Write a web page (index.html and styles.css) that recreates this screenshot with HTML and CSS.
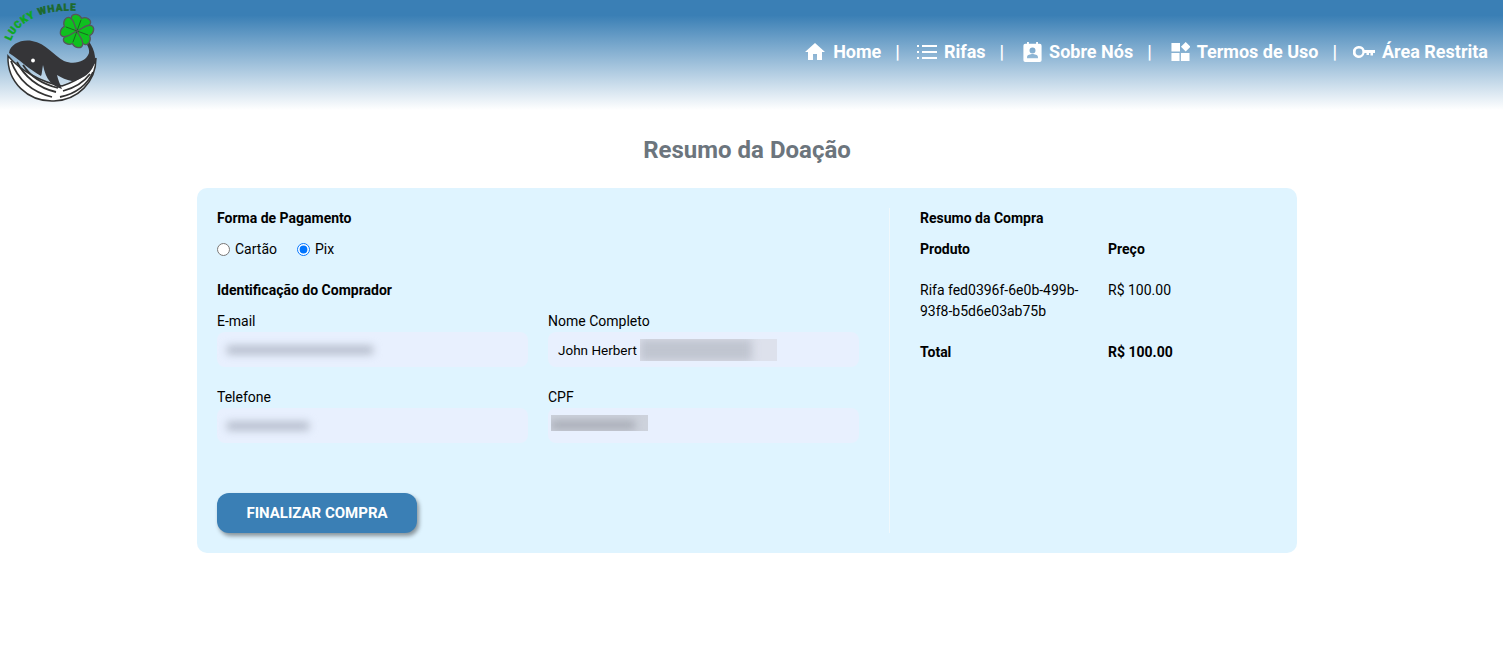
FILE: index.html
```html
<!DOCTYPE html>
<html lang="pt-BR">
<head>
  <meta charset="UTF-8">
  <meta name="viewport" content="width=device-width, initial-scale=1.0">
  <title>Lucky Whale</title>
  <link rel="stylesheet" href="styles.css">
</head>
<body>

  <header class="topbar">
    <a class="logo" href="#">
      <svg width="104" height="104" viewBox="0 0 104 104">
        <defs>
          <path id="logoArc" d="M11 41 C16 26 36 8 78 11"/>
          <g id="leaf">
            <path d="M0 0 C-3 -4 -10 -6 -10 -11.500 C-10 -15.500 -4 -17 0 -13.500 C4 -17 10 -15.500 10 -11.500 C10 -6 3 -4 0 0Z"/>
            <path d="M0 0 L0 -12" fill="none" stroke="#1c5a22" stroke-width="0.8"/>
          </g>
        </defs>
        <text class="logo-text"><textPath href="#logoArc"><tspan class="lucky">LUCKY</tspan> <tspan class="whale">WHALE</tspan></textPath></text>
        <!-- whale belly -->
        <path d="M8 56 C7 82 28 102 54 101 C78 100 96 82 96 58 C92 72 80 80 62 86 C40 82 20 70 8 56Z" fill="#fff" stroke="#333" stroke-width="1.5"/>
        <path d="M11 61 C18 80 32 92 52 97 M17 62 C24 76 38 88 56 92 M23 65 C30 76 42 84 58 88 M60 97 C76 94 88 84 93 72 M63 91 C74 88 84 82 90 74" fill="none" stroke="#333" stroke-width="1.800"/>
        <!-- whale body -->
        <path d="M9 53 C10 44 22 39 32 41 C46 43 54 56 64 61 C74 65 86 62 89 53 C90 48 86 42 78 32 L80 31 C88 38 96 50 95 60 C94 72 82 80 72 81 C66 80 62 78 57 75 C58 80 60 84 62 89 C52 86 46 80 43 65 C42 70 42 74 41 76 C30 70 20 60 9 53Z" fill="#353538"/>
        <circle cx="33" cy="60.500" r="1.900" fill="#fff"/>
        <!-- clover -->
        <g fill="#0fc01f" stroke="#55585a" stroke-width="1.300">
          <use href="#leaf" transform="translate(77 31) rotate(20)"/>
          <use href="#leaf" transform="translate(77 31) rotate(110)"/>
          <use href="#leaf" transform="translate(77 31) rotate(200)"/>
          <use href="#leaf" transform="translate(77 31) rotate(290)"/>
        </g>
      </svg>
    </a>
    <nav class="menu">
      <a href="#">
        <svg class="ico" width="20" height="17" viewBox="2 3 20 17"><path d="M10 20v-6h4v6h5v-8h3L12 3 2 12h3v8z"/></svg>
        Home
      </a>
      <span class="sep">|</span>
      <a href="#">
        <svg class="ico" width="20" height="16" viewBox="0 0 20 16"><path d="M0 1h2v2H0zM5 1h15v2H5zM0 7h2v2H0zM5 7h15v2H5zM0 13h2v2H0zM5 13h15v2H5z"/></svg>
        Rifas
      </a>
      <span class="sep">|</span>
      <a class="nudge-2" href="#">
        <svg class="ico" width="19" height="20" viewBox="0 0 20 22"><path fill-rule="evenodd" d="M4 0h2v2h8V0h2v2h2a2 2 0 0 1 2 2v16a2 2 0 0 1-2 2H2a2 2 0 0 1-2-2V4a2 2 0 0 1 2-2h2zM10 6a3.300 3.300 0 1 0 0 6.600A3.300 3.300 0 0 0 10 6zM4 18h12v-1.500c0-2.200-4-3.200-6-3.200s-6 1-6 3.200z"/></svg>
        Sobre Nós
      </a>
      <span class="sep">|</span>
      <a class="nudge-1" href="#">
        <svg class="ico" width="20" height="19" viewBox="0 0 20 20"><path d="M1 1h9v9H1zM1 11.500h8.500V20H1zM11 11.500h9V20h-9zM16 0l5 5-5 5-5-5z"/></svg>
        Termos de Uso
      </a>
      <span class="sep">|</span>
      <a class="pull-1" href="#">
        <svg class="ico" width="22" height="12" viewBox="0 0 22 12"><path fill-rule="evenodd" d="M6 0a6 6 0 0 1 5.600 4H22v3h-2v2.500h-2.500V7H16v2h-2.500V7h-1.900A6 6 0 1 1 6 0zm0 2.600a3.200 3.200 0 1 0 0 6.800 3.200 3.200 0 0 0 0-6.800z"/></svg>
        Área Restrita
      </a>
    </nav>
  </header>

  <main>
    <h1 class="page-title">Resumo da Doação</h1>

    <section class="card">
      <div class="col-form">
        <h2>Forma de Pagamento</h2>
        <div class="radios">
          <label><input type="radio" name="pay"> Cartão</label>
          <label><input type="radio" name="pay" checked> Pix</label>
        </div>

        <h2 class="buyer">Identificação do Comprador</h2>
        <div class="fields">
          <div class="field">
            <label>E-mail</label>
            <div class="input"><span class="blur blur-email"></span></div>
          </div>
          <div class="field">
            <label>Nome Completo</label>
            <div class="input"><span class="name">John Herbert</span><span class="blur-box blur-name"><i></i></span></div>
          </div>
          <div class="field">
            <label>Telefone</label>
            <div class="input"><span class="blur blur-phone"></span></div>
          </div>
          <div class="field">
            <label>CPF</label>
            <div class="input"><span class="blur-box blur-cpf"><i></i></span></div>
          </div>
        </div>

        <button class="buy" type="button">FINALIZAR COMPRA</button>
      </div>

      <div class="col-summary">
        <h2>Resumo da Compra</h2>
        <div class="summary">
          <b>Produto</b>
          <b>Preço</b>
          <span class="prod">Rifa fed0396f-6e0b-499b-93f8-b5d6e03ab75b</span>
          <span class="prod">R$ 100.00</span>
          <b>Total</b>
          <b>R$ 100.00</b>
        </div>
      </div>
    </section>
  </main>

</body>
</html>
```

FILE: styles.css
```css
body {
  margin: 0;
  padding: 0;
  font-family: 'Roboto', 'Liberation Sans', sans-serif;
  font-size: 14px;
  color: #000000;
  background-color: #ffffff;
}

.topbar {
  height: 110px;
  display: flex;
  justify-content: space-between;
  background: linear-gradient(to bottom, #3a7fb5 0%, #3a7fb5 14%, #ffffff 100%);
}
.logo {
  display: block;
  height: 104px;
}
.logo-text {
  font-size: 10px;
  font-weight: 900;
  letter-spacing: 0.9px;
  stroke-width: 0.4px;
}
.lucky { fill: #0fa81f; stroke: #0fa81f; }
.whale { fill: #1d6a2c; stroke: #1d6a2c; }
.menu {
  display: flex;
  align-items: center;
  height: 103px;
  padding-right: 15px;
  font-size: 18px;
  font-weight: 700;
  color: white;
}
.menu a {
  display: flex;
  align-items: center;
  gap: 7px;
  color: white;
  text-decoration: none;
}
.menu a:first-child {
  gap: 8px;
}
.menu .nudge-1 { margin-left: 1px; }
.menu .nudge-2 { margin-left: 2px; }
.menu .pull-1 { margin-left: -1px; }
.ico {
  fill: white;
}
.sep {
  margin: 0 17px 0 14px;
}

main {
  padding-right: 9px;
}
.page-title {
  margin: 26px 0 24px;
  text-align: center;
  font-size: 24px;
  line-height: 28px;
  font-weight: 700;
  color: #6c757d;
}

.card {
  width: 1100px;
  height: 365px;
  box-sizing: border-box;
  margin: 0 auto;
  padding: 20px;
  display: flex;
  background-color: #dff4ff;
  border-radius: 10px;
}
.col-form {
  width: 673px;
  box-sizing: border-box;
  padding-right: 30px;
  border-right: 1px solid #f0f8fc;
}
.col-summary {
  flex: 1;
  padding-left: 30px;
}
h2 {
  margin: 0;
  font-size: 14px;
  line-height: 20px;
  font-weight: 700;
}
.radios {
  display: flex;
  gap: 20px;
  margin-top: 11px;
  line-height: 20px;
}
.radios label {
  display: flex;
  align-items: center;
  gap: 5px;
}
.radios input {
  margin: 0;
  width: 13px;
  height: 13px;
}
.buyer {
  margin-top: 21px;
}

.fields {
  display: grid;
  grid-template-columns: 311px 311px;
  column-gap: 20px;
  row-gap: 20px;
  margin-top: 11px;
}
.field label {
  display: block;
  line-height: 20px;
  margin-bottom: 1px;
}
.input {
  height: 35px;
  display: flex;
  align-items: center;
  background-color: #e8f0fe;
  border-radius: 8px;
  overflow: hidden;
}
.name {
  margin-left: 10px;
  font-size: 13.500px;
}
.blur {
  display: block;
  height: 8px;
  margin-left: 10px;
  background-color: #b0b7c6;
  filter: blur(4px);
}
.blur-email { width: 146px; }
.blur-phone { width: 82px; }
.blur-box {
  display: block;
  overflow: hidden;
}
.blur-box i {
  display: block;
  filter: blur(4px);
}
.blur-name {
  width: 137px;
  height: 22px;
  margin-left: 3px;
  background-color: #dde1ec;
}
.blur-name i {
  width: 112px;
  height: 22px;
  background-color: #c0c5d0;
}
.blur-cpf {
  width: 97px;
  height: 16px;
  margin: -5px 0 0 3px;
  background-color: #cdd2dc;
}
.blur-cpf i {
  width: 84px;
  height: 8px;
  margin-top: 6px;
  background-color: #a4a8b2;
}

.buy {
  display: block;
  width: 200px;
  height: 40px;
  margin-top: 50px;
  border: none;
  border-radius: 12px;
  background-color: #3a7fb5;
  color: white;
  font-family: inherit;
  font-size: 15px;
  font-weight: 700;
  box-shadow: 2px 3px 4px rgba(0, 0, 0, 0.4);
  cursor: pointer;
}

.summary {
  display: grid;
  grid-template-columns: 188px 1fr;
  margin-top: 11px;
  line-height: 21px;
}
.summary b {
  font-weight: 700;
}
.prod {
  margin-top: 20px;
  margin-bottom: 20px;
  padding-right: 20px;
}
```
